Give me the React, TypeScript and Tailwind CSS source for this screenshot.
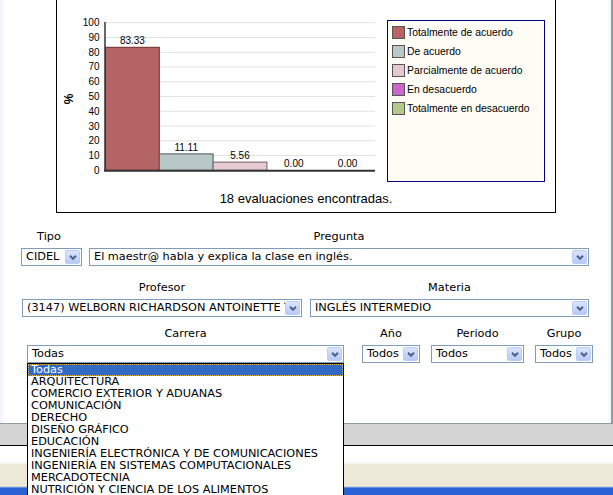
import React from "react";

const ticks = [0, 10, 20, 30, 40, 50, 60, 70, 80, 90, 100];
const yOf = (v: number) => 170.3 - 1.476 * v;

const bars = [
  { v: 83.33, fill: "#b46464", stroke: "#6e2c2c" },
  { v: 11.11, fill: "#b8c7c7", stroke: "#4f5b5b" },
  { v: 5.56, fill: "#e6cbd3", stroke: "#6f6266" },
  { v: 0, fill: "#cc66cc", stroke: "#555555" },
  { v: 0, fill: "#b4c88c", stroke: "#555555" },
];

const legend = [
  { label: "Totalmente de acuerdo", color: "bg-[#bb6262]" },
  { label: "De acuerdo", color: "bg-[#b9c8c8]" },
  { label: "Parcialmente de acuerdo", color: "bg-[#e6c8d0]" },
  { label: "En desacuerdo", color: "bg-[#cc66cc]" },
  { label: "Totalmente en desacuerdo", color: "bg-[#b4c88c]" },
];

const carreras = [
  "Todas",
  "ARQUITECTURA",
  "COMERCIO EXTERIOR Y ADUANAS",
  "COMUNICACIÓN",
  "DERECHO",
  "DISEÑO GRÁFICO",
  "EDUCACIÓN",
  "INGENIERÍA ELECTRÓNICA Y DE COMUNICACIONES",
  "INGENIERÍA EN SISTEMAS COMPUTACIONALES",
  "MERCADOTECNIA",
  "NUTRICIÓN Y CIENCIA DE LOS ALIMENTOS",
];

function ArrowButton() {
  return (
    <span className="mr-px flex h-[14px] w-[15px] shrink-0 items-center justify-center rounded-[2px] border border-[#bccdf5] bg-linear-to-b from-[#dae5fe] to-[#b6c9f6]">
      <svg width="8" height="5" viewBox="0 0 8 5">
        <path d="M1 0.8 L4 3.8 L7 0.8" fill="none" stroke="#4d6185" strokeWidth="2" />
      </svg>
    </span>
  );
}

function Combo({ value, width }: { value: string; width: string }) {
  return (
    <div className={`${width} flex h-[18px] items-center border border-[#7f9db9] bg-white`}>
      <span className="flex-1 overflow-hidden whitespace-nowrap pl-[4px] leading-[16px] text-black">{value}</span>
      <ArrowButton />
    </div>
  );
}

function Label({ children }: { children: React.ReactNode }) {
  return <div className="h-[14px] text-center leading-[14px] text-black">{children}</div>;
}

function Chart() {
  return (
    <svg className="shrink-0 font-['Liberation_Sans',Arial,sans-serif]" width="330" height="190">
      {ticks.map((t) => (
        <g key={t}>
          {t > 0 && <line x1="48" x2="318" y1={yOf(t)} y2={yOf(t)} stroke="#e2e2e2" strokeWidth="1" />}
          <text x="42.5" y={yOf(t) + 3.5} fontSize="10" textAnchor="end" fill="#000">
            {t}
          </text>
        </g>
      ))}
      {bars.map((b, i) => {
        const x = 48.5 + i * 53.8;
        const top = yOf(b.v);
        return (
          <g key={i}>
            {b.v > 0 && (
              <rect x={x} y={top} width="53.8" height={170.3 - top} fill={b.fill} stroke={b.stroke} strokeWidth="1" />
            )}
            <text x={x + 26.9} y={top - 3} fontSize="10" textAnchor="middle" fill="#000">
              {b.v.toFixed(2)}
            </text>
          </g>
        );
      })}
      <line x1="48" x2="48" y1="22" y2="171" stroke="#333" strokeWidth="1.5" />
      <line x1="47" x2="318" y1="170.7" y2="170.7" stroke="#333" strokeWidth="2" />
      <text x="13" y="99" fontSize="12" fontWeight="bold" textAnchor="middle" transform="rotate(-90 13 99)" dominantBaseline="middle" fill="#000">
        %
      </text>
    </svg>
  );
}

export default function App() {
  return (
    <div className="h-[495px] w-[613px] overflow-hidden bg-white">
      <div className="h-[424px] border-b border-r-2 border-[#8f9ea6]">
        <div className="h-full border-l-[3px] border-r-2 border-[#f4f4fc] font-['DejaVu_Sans',sans-serif] text-[11.3px]">
          <div className="ml-[53px] flex h-[213px] w-[500px] flex-col border border-t-0 border-black">
            <div className="flex">
              <Chart />
              <div className="mt-[20px] flex h-[162px] w-[158px] flex-col gap-[6px] border border-[#000080] bg-[#fffcf5] pl-[4px] pt-[5px] font-['Liberation_Sans',Arial,sans-serif] text-[10.4px] text-black">
                {legend.map((l) => (
                  <div key={l.label} className="flex h-[13px] items-center gap-[2px]">
                    <span className={`h-[13px] w-[13px] border border-[#555] ${l.color}`} />
                    <span className="leading-[13px]">{l.label}</span>
                  </div>
                ))}
              </div>
            </div>
            <div className="mt-px text-center font-['Liberation_Sans',Arial,sans-serif] text-[13px] leading-[16px] text-black">
              18 evaluaciones encontradas.
            </div>
          </div>

          <div className="mt-[17px] flex items-start">
            <div className="ml-[18px] flex w-[61px] flex-col gap-[4px]">
              <div className="pr-[5px]">
                <Label>Tipo</Label>
              </div>
              <Combo value="CIDEL" width="w-[61px]" />
            </div>
            <div className="ml-[7px] flex w-[500px] flex-col gap-[4px]">
              <Label>Pregunta</Label>
              <Combo value="El maestr@ habla y explica la clase en inglés." width="w-[500px]" />
            </div>
          </div>

          <div className="mt-[15px] flex items-start">
            <div className="ml-[19px] flex w-[280px] flex-col gap-[4px]">
              <Label>Profesor</Label>
              <Combo value="(3147) WELBORN RICHARDSON ANTOINETTE T" width="w-[280px]" />
            </div>
            <div className="ml-[8px] flex w-[279px] flex-col gap-[4px]">
              <Label>Materia</Label>
              <Combo value="INGLÉS INTERMEDIO" width="w-[279px]" />
            </div>
          </div>

          <div className="mt-[10px] flex items-start">
            <div className="relative ml-[24px] flex w-[317px] flex-col gap-[4px]">
              <Label>Carrera</Label>
              <Combo value="Todas" width="w-[317px]" />
              <ul className="absolute left-0 top-full z-10 w-[317px] border border-black bg-white">
                {carreras.map((c, i) => (
                  <li
                    key={c}
                    className={
                      i === 0
                        ? "h-[12px] whitespace-nowrap bg-[#316ac5] pl-[3px] leading-[12px] text-white outline-1 -outline-offset-1 outline-dotted outline-[#e7b64c]"
                        : "h-[12px] whitespace-nowrap pl-[3px] leading-[12px] text-black"
                    }
                  >
                    {c}
                  </li>
                ))}
              </ul>
            </div>
            <div className="ml-[18px] flex w-[58px] flex-col gap-[4px]">
              <Label>Año</Label>
              <Combo value="Todos" width="w-[58px]" />
            </div>
            <div className="ml-[11px] flex w-[93px] flex-col gap-[4px]">
              <Label>Periodo</Label>
              <Combo value="Todos" width="w-[93px]" />
            </div>
            <div className="ml-[11px] flex w-[58px] flex-col gap-[4px]">
              <Label>Grupo</Label>
              <Combo value="Todos" width="w-[58px]" />
            </div>
          </div>
        </div>
      </div>
      <div className="h-[21px] bg-[#d4d4d4]" />
      <div className="h-px bg-black" />
      <div className="h-[16px] bg-white" />
      <div className="h-[25px] border-b border-t-2 border-b-[#d8d4c2] border-t-[#f6f5ee] bg-[#ece9d8]" />
      <div className="h-[8px] border-t border-[#5a8ff0] bg-[#2a62d6]" />
    </div>
  );
}
